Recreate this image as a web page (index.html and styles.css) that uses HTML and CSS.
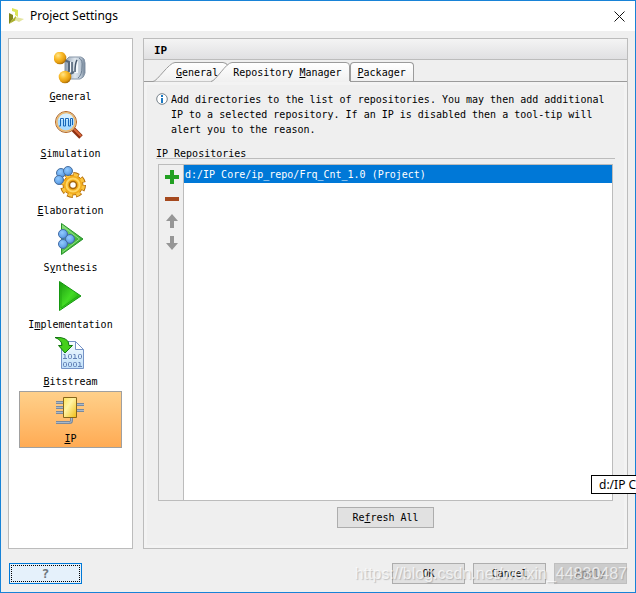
FILE: index.html
```html
<!DOCTYPE html>
<html lang="en">
<head>
<meta charset="utf-8">
<title>Project Settings</title>
<link rel="stylesheet" href="styles.css">
</head>
<body>
<svg class="defs" aria-hidden="true">
  <defs>
    <radialGradient id="gold" cx=".35" cy=".3" r=".75"><stop offset="0" stop-color="#ffe58a"/><stop offset=".4" stop-color="#fbbd2c"/><stop offset=".75" stop-color="#e39c10"/><stop offset="1" stop-color="#9c6206"/></radialGradient>
    <radialGradient id="blue" cx=".4" cy=".35" r=".75"><stop offset="0" stop-color="#93cbff"/><stop offset=".6" stop-color="#68a8ec"/><stop offset="1" stop-color="#4379c0"/></radialGradient>
    <linearGradient id="steel"><stop offset="0" stop-color="#8d9db0"/><stop offset=".5" stop-color="#dfe7ee"/><stop offset=".8" stop-color="#b9c6d3"/><stop offset="1" stop-color="#6b7d91"/></linearGradient>
    <linearGradient id="green" x2="1" y2="1"><stop offset="0" stop-color="#1b9a10"/><stop offset=".5" stop-color="#43dc24"/><stop offset="1" stop-color="#108508"/></linearGradient>
    <linearGradient id="leaf" x2="1" y2="1"><stop offset="0" stop-color="#8be07c"/><stop offset=".5" stop-color="#4dbf42"/><stop offset="1" stop-color="#23962a"/></linearGradient>
    <linearGradient id="chip" x2="1" y2="1"><stop offset="0" stop-color="#ffe45a"/><stop offset=".4" stop-color="#fff3a4"/><stop offset="1" stop-color="#f0bd12"/></linearGradient>
    <linearGradient id="paper" x2="0" y2="1"><stop offset="0" stop-color="#f7fcff"/><stop offset="1" stop-color="#bfe0fa"/></linearGradient>
    <linearGradient id="tab" x2="0" y2="1"><stop offset="0" stop-color="#ffffff"/><stop offset="1" stop-color="#f0f0f0"/></linearGradient>
  </defs>
</svg>
<div class="window">
  <header class="titlebar">
    <svg width="16" height="16" viewBox="0 0 16 16" aria-hidden="true"><path d="M4 0l6 2v7l-3-2V4L4 3z" fill="#dce457"/><path d="M1 5l4 2v4l-4 5z" fill="#83871a"/><path d="M1 16l4-5 3-3v4z" fill="#a9af28"/><path d="M8 9l8 2-5 3-4-2z" fill="#e4e5a0"/></svg>
    <h1>Project Settings</h1>
    <button class="close" type="button" aria-label="Close"><svg width="11" height="11" viewBox="0 0 11 11"><path d="M.5.5l10 10M10.500.5l-10 10" stroke="#111" fill="none"/></svg></button>
  </header>
  <main class="body">
    <nav class="sidebar">
      <button type="button" class="item"><svg width="32" height="32" viewBox="0 0 32 32"><path d="M15 5h12q4 1 4 6v10q-1 5-5 6H14l-3-3V9z" fill="url(#steel)" stroke="#8796a8"/><path d="M25 6q4 2 3 9 0 8-4 11" fill="none" stroke="#6d7f93"/><path d="M15 10h3v11h-3zM21 9h3v12h-4z" fill="#f5f9fc"/><path d="M23 8q-2 3-2 12M18 10v10" fill="none" stroke="#46586d" stroke-width="1.500"/><path d="M10 8l5 2v9l-3 3M14 23l6-3" fill="none" stroke="#55677b" stroke-width="2"/><circle cx="6" cy="6" r="6.300" fill="url(#gold)"/><circle cx="11" cy="25" r="6.300" fill="url(#gold)"/></svg><span><u>G</u>eneral</span></button>
      <button type="button" class="item"><svg width="32" height="32" viewBox="0 0 32 32"><path d="M19 20l8 8" stroke="#8c3010" stroke-width="5"/><path d="M20 20l7 7" stroke="#d9673a" stroke-width="2"/><circle cx="12" cy="13" r="10.500" fill="#a9dbff" stroke="#b8641f"/><circle cx="12" cy="13" r="9.200" fill="none" stroke="#f4b866" stroke-width="1.500"/><path d="M4.500 11q1-6 7.500-6.500t7.500 6.500z" fill="#d6efff"/><path d="M5 17h1.500V9.500h3V17h2V9.500h3V17h2V9.500h2V16" fill="none" stroke="#1767b8"/></svg><span><u>S</u>imulation</span></button>
      <button type="button" class="item"><svg width="32" height="32" viewBox="0 0 32 32"><circle cx="19" cy="19" r="11" fill="none" stroke="#b26b08" stroke-width="4" stroke-dasharray="5.640 3"/><circle cx="19" cy="19" r="10" fill="#f2ac1c" stroke="#c27a09"/><circle cx="19" cy="19" r="10.500" fill="none" stroke="#fbc540" stroke-width="3" stroke-dasharray="4.250 4" stroke-dashoffset="-.5"/><circle cx="19" cy="19" r="6.500" fill="none" stroke="#ffd765" stroke-width="2"/><circle cx="19" cy="19" r="3.500" fill="#fff" stroke="#a5650a" stroke-width="1.500"/><g fill="url(#blue)" stroke="#496f9e"><circle cx="7" cy="7" r="4.500"/><circle cx="14" cy="5" r="4.500"/><circle cx="5" cy="14" r="4.500"/></g></svg><span><u>E</u>laboration</span></button>
      <button type="button" class="item"><svg width="32" height="32" viewBox="0 0 32 32"><path d="M7.500.500L29 16 7.500 31.500z" fill="url(#leaf)" stroke="#27932a"/><path d="M8.500 3l17 13-17 13" fill="none" stroke="#8fe085"/><g fill="url(#blue)" stroke="#426ba6"><circle cx="9" cy="11" r="4.500"/><circle cx="16" cy="16" r="4.500"/><circle cx="9" cy="21" r="4.500"/></g></svg><span>S<u>y</u>nthesis</span></button>
      <button type="button" class="item"><svg width="32" height="32" viewBox="0 0 32 32"><path d="M5.500 1.500L27 16 5.500 30.500z" fill="url(#green)" stroke="#159710"/><path d="M7 4v24L24 16" fill="none" stroke="#22ad13"/></svg><span>I<u>m</u>plementation</span></button>
      <button type="button" class="item"><svg width="32" height="32" viewBox="0 0 32 32"><path d="M7.500 4.500h14l8 8v19h-22z" fill="url(#paper)" stroke="#7694c7"/><path d="M21.500 4.500v8h8z" fill="#fff" stroke="#7694c7"/><g fill="none" stroke="#6380b5"><path d="M9.500 17.500h1.500v4M9 21.500h4M19.500 17.500h1.500v4M19 21.500h4M24.500 25.500h1.500v4M24 29.500h4"/><rect x="14.500" y="17.500" width="3" height="4" rx="1"/><rect x="24.500" y="17.500" width="3" height="4" rx="1"/><rect x="9.500" y="25.500" width="3" height="4" rx="1"/><rect x="14.500" y="25.500" width="3" height="4" rx="1"/><rect x="19.500" y="25.500" width="3" height="4" rx="1"/></g><path d="M1 .5q14-1 14 8h3.500L11 16 4.500 8.500H8Q8 3 1 .5z" fill="#46cf1b" stroke="#12780e"/></svg><span><u>B</u>itstream</span></button>
      <button type="button" class="item selected" aria-current="page"><svg width="32" height="32" viewBox="0 0 32 32"><g fill="none" stroke="#7b8a9c" stroke-width="3"><path d="M2 8.500h7M2 13.500h7M2 18.500h7M22 10.500h8M22 16.500h8M2 28.500h13.500q2 0 2-2V23"/></g><g fill="none" stroke="#a9b8c9"><path d="M2 8.500h7M2 13.500h7M2 18.500h7M22 10.500h8M22 16.500h8M2 28.500h13.500q2 0 2-2V23"/></g><path d="M9.500 3.500h13v20h-13z" fill="url(#chip)" stroke="#87651a"/></svg><span><u>I</u>P</span></button>
    </nav>
    <section class="panel">
      <h2>IP</h2>
      <div class="tabs" role="tablist">
        <button type="button" role="tab" class="tab first"><svg viewBox="0 0 76 20" width="76" height="20"><path d="M0 19.500C6 17 16 .5 22 .5h48l4 3v16z" fill="url(#tab)"/><path d="M0 19.500C4 19.500 16 .5 22 .5h48q4 0 5 4" fill="none" stroke="#9b9b9b"/></svg><span><u>G</u>eneral</span></button>
        <button type="button" role="tab" aria-selected="true" class="tab active"><svg viewBox="0 0 139 20" width="139" height="20"><path d="M0 20C5 19 15 .5 21 .5h114q3.500 0 3.500 3.500v16z" fill="url(#tab)"/><path d="M0 19.500C5 19 15 .5 21 .5h114q3.500 0 3.500 3.500v16" fill="none" stroke="#9b9b9b"/></svg><span>Repository <u>M</u>anager</span></button>
        <button type="button" role="tab" class="tab last"><span><u>P</u>ackager</span></button>
      </div>
      <div class="content">
        <div class="info">
          <svg width="12" height="12" viewBox="0 0 12 12" aria-hidden="true"><circle cx="6" cy="6" r="5.300" fill="#fff" stroke="#77828b"/><path d="M5 5h2v5H5zM5 2h2v2H5z" fill="#1a78c2"/></svg>
          <p>Add directories to the list of repositories. You may then add additional IP to a selected repository. If an IP is disabled then a tool-tip will alert you to the reason.</p>
        </div>
        <h3>IP Repositories</h3>
        <div class="repos">
          <div class="tools">
            <button type="button" aria-label="Add"><svg width="14" height="14" viewBox="0 0 14 14"><path d="M5 0h4v5h5v4H9v5H5V9H0V5h5z" fill="#22a022"/></svg></button>
            <button type="button" aria-label="Remove"><svg width="14" height="14" viewBox="0 0 14 14"><path d="M0 5h14v4H0z" fill="#a5491e"/></svg></button>
            <button type="button" aria-label="Move up"><svg width="14" height="14" viewBox="0 0 14 14"><path d="M7 0l6 7H9v7H5V7H1z" fill="#969696"/></svg></button>
            <button type="button" aria-label="Move down"><svg width="14" height="14" viewBox="0 0 14 14"><path d="M7 14l6-7H9V0H5v7H1z" fill="#969696"/></svg></button>
          </div>
          <ul class="list"><li>d:/IP Core/ip_repo/Frq_Cnt_1.0 (Project)</li></ul>
        </div>
        <button type="button" class="btn refresh">Re<u>f</u>resh All</button>
      </div>
    </section>
  </main>
  <footer class="footer">
    <button type="button" class="btn help" aria-label="Help"><span>?</span></button>
    <button type="button" class="btn">OK</button>
    <button type="button" class="btn">Cancel</button>
    <button type="button" class="btn" disabled><u>A</u>pply</button>
  </footer>
</div>
<div class="tooltip">d:/IP Core/ip_repo</div>
<div class="watermark">https://blog.csdn.net/weixin_44830487</div>
</body>
</html>
```
FILE: styles.css
```css
* { box-sizing: border-box; }
body {
  position: relative;
  margin: 0;
  height: 100vh;
  overflow: hidden;
  color: #000;
  font: 10px/15px "DejaVu Sans Mono", monospace;
}
button { padding: 0; border: 0; background: none; color: inherit; font: inherit; }
h1, h2, h3, p, ul { margin: 0; padding: 0; font: inherit; }
svg { display: block; flex: none; }
u { text-underline-offset: 1px; }
.defs { position: absolute; width: 0; height: 0; }
.window {
  display: flex;
  flex-direction: column;
  height: 100%;
  border: 1px solid #1883d7;
  background: #efefef;
}
.titlebar {
  display: flex;
  align-items: center;
  gap: 6px;
  height: 30px;
  padding: 0 10px 0 7px;
  background: #fff;
}
.titlebar h1 { flex: 1; font: 12px/16px "Noto Sans", sans-serif; }
.body { display: flex; flex: 1; gap: 10px; min-height: 0; padding: 7px 7px 0; }
.sidebar {
  display: flex;
  flex: none;
  flex-direction: column;
  width: 125px;
  padding: 10px;
  border: 1px solid #bcbcbc;
  background: #fff;
}
.item {
  display: flex;
  flex-direction: column;
  align-items: center;
  gap: 5px;
  height: 57px;
  padding-top: 2px;
  border: 1px solid transparent;
}
.item svg { margin-right: 1px; }
.item.selected { border-color: #a0a0a0; background: linear-gradient(#ffd08a, #ffab54); }
.panel {
  display: flex;
  flex: 1;
  flex-direction: column;
  min-width: 0;
  border: 1px solid #bcbcbc;
}
.panel h2 {
  height: 21px;
  padding: 4px 10px;
  border-bottom: 1px solid #bcbcbc;
  background: linear-gradient(#f4f4f4, #e0e0e2);
  font-weight: bold;
  font-size: 11px;
}
.tabs { display: flex; height: 22px; padding: 2px 0 0 9px; border-bottom: 1px solid #9b9b9b; }
.tab { position: relative; height: 20px; }
.tab svg { position: absolute; top: 0; left: 0; }
.tab span { position: relative; }
.tab.first { padding: 0 11px 0 23px; margin-right: -18px; }
.tab.active { z-index: 1; padding: 0 9px 0 22px; }
.tab.active::after {
  content: "";
  position: absolute;
  top: 19px;
  right: 1px;
  left: 2px;
  height: 1px;
  background: #f0f0f0;
}
.tab.last {
  height: 19px;
  margin-left: -1px;
  padding: 0 7px;
  border: 1px solid #9b9b9b;
  border-bottom: 0;
  border-radius: 4px 4px 0 0;
  background: linear-gradient(#fff, #f0f0f0);
}
.content {
  display: flex;
  flex: 1;
  flex-direction: column;
  margin: 3px;
  padding: 7px 9px 17px;
  box-shadow: 0 0 0 3px #f3f3f3;
}
.info { display: flex; gap: 3px; }
.info svg { margin-top: 1px; }
.content h3 { height: 13px; margin-top: 9px; border-bottom: 1px solid #bcbcbc; }
.repos { display: flex; flex: 1; margin: 5px 2px 0; border: 1px solid #bcbcbc; }
.tools {
  display: flex;
  flex: none;
  flex-direction: column;
  align-items: center;
  gap: 8px;
  width: 25px;
  padding: 5px 0 0 1px;
  border-right: 1px solid #bcbcbc;
}
.list { flex: 1; background: #fff; list-style: none; }
.list li { height: 18px; padding: 2px 1px; background: #0078d7; color: #fff; }
.btn {
  width: 73px;
  height: 21px;
  border: 1px solid #adadad;
  background: #e1e1e1;
}
.btn:disabled { border-color: #bfbfbf; background: #ccc; color: #838383; }
.refresh { align-self: center; width: 97px; margin-top: 6px; }
.footer { display: flex; gap: 8px; padding: 14px 8px 8px; }
.help { margin-right: auto; padding: 1px; border-color: #0078d7; background: #e5f1fb; }
.help span {
  display: block;
  height: 17px;
  border: 1px dotted #000;
  color: #6d777d;
  font-weight: bold;
  font-size: 13px;
}
.tooltip {
  position: absolute;
  top: 475px;
  left: 591px;
  z-index: 2;
  padding: 0 7px;
  border: 1px solid #000;
  background: #fff;
  font: 12px/17px "Noto Sans", sans-serif;
  white-space: nowrap;
}
.watermark {
  position: absolute;
  right: 9px;
  bottom: 9px;
  color: rgba(255, 255, 255, 0.7);
  font: 16px/20px "Liberation Sans", sans-serif;
  text-shadow: 1px 1px 1px rgba(120, 120, 120, 0.4);
  pointer-events: none;
}
```
